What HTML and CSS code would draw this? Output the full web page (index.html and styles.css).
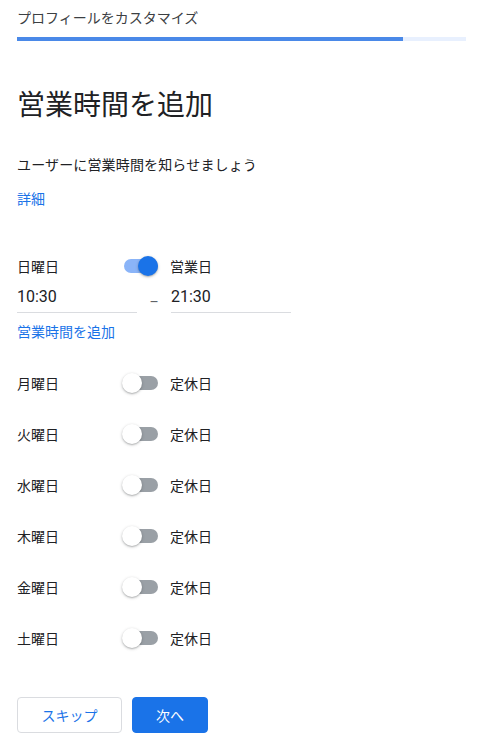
FILE: index.html
```html
<!DOCTYPE html>
<html lang="ja">
<head>
<meta charset="utf-8">
<title>営業時間を追加</title>
<link rel="stylesheet" href="styles.css">
</head>
<body>
<div class="page">
  <div class="header">プロフィールをカスタマイズ</div>
  <div class="progress"><div class="progress-fill"></div></div>

  <h1 class="title">営業時間を追加</h1>
  <p class="subtitle">ユーザーに営業時間を知らせましょう</p>
  <a class="link details">詳細</a>

  <div class="day-row first">
    <span class="day">日曜日</span>
    <span class="switch on"><span class="track"></span><span class="thumb"></span></span>
    <span class="status">営業日</span>
  </div>
  <div class="times">
    <div class="time-field">10:30</div>
    <div class="dash">–</div>
    <div class="time-field">21:30</div>
  </div>
  <a class="link add-hours">営業時間を追加</a>

  <div class="days">
    <div class="day-row">
      <span class="day">月曜日</span>
      <span class="switch"><span class="track"></span><span class="thumb"></span></span>
      <span class="status">定休日</span>
    </div>
    <div class="day-row">
      <span class="day">火曜日</span>
      <span class="switch"><span class="track"></span><span class="thumb"></span></span>
      <span class="status">定休日</span>
    </div>
    <div class="day-row">
      <span class="day">水曜日</span>
      <span class="switch"><span class="track"></span><span class="thumb"></span></span>
      <span class="status">定休日</span>
    </div>
    <div class="day-row">
      <span class="day">木曜日</span>
      <span class="switch"><span class="track"></span><span class="thumb"></span></span>
      <span class="status">定休日</span>
    </div>
    <div class="day-row">
      <span class="day">金曜日</span>
      <span class="switch"><span class="track"></span><span class="thumb"></span></span>
      <span class="status">定休日</span>
    </div>
    <div class="day-row">
      <span class="day">土曜日</span>
      <span class="switch"><span class="track"></span><span class="thumb"></span></span>
      <span class="status">定休日</span>
    </div>
  </div>

  <div class="actions">
    <button class="btn btn-outline">スキップ</button>
    <button class="btn btn-primary">次へ</button>
  </div>
</div>
</body>
</html>
```

FILE: styles.css
```css
* { box-sizing: border-box; }

html, body {
  margin: 0;
  padding: 0;
  background: #ffffff;
}

body {
  font-family: Roboto, "Noto Sans CJK JP", "Noto Sans", sans-serif;
  color: #202124;
}

.page {
  display: flex;
  flex-direction: column;
  align-items: flex-start;
  padding: 8px 20px 0 17px;
}

.header {
  font-size: 14px;
  line-height: 20px;
  color: #3c4043;
}

.progress {
  align-self: stretch;
  margin-top: 9px;
  height: 4px;
  background: #e8f0fe;
}

.progress-fill {
  width: 386px;
  height: 100%;
  background: #4a89e8;
}

.title {
  margin: 47px 0 0;
  font-size: 28px;
  line-height: 36px;
  font-weight: 400;
  color: #202124;
}

.subtitle {
  margin: 31px 0 0;
  font-size: 14px;
  line-height: 20px;
  letter-spacing: 0.15px;
  color: #202124;
}

.link {
  font-size: 14px;
  line-height: 20px;
  color: #1a73e8;
  text-decoration: none;
}

.details {
  margin-top: 14px;
}

.day-row {
  display: flex;
  align-items: center;
  height: 24px;
}

.day-row.first {
  margin-top: 45px;
}

.day {
  width: 105px;
  font-size: 14px;
  color: #202124;
}

.status {
  margin-left: 10px;
  font-size: 14px;
  color: #202124;
}

.switch {
  position: relative;
  width: 38px;
  height: 24px;
  flex: none;
}

.track {
  position: absolute;
  left: 2px;
  top: 5px;
  width: 34px;
  height: 14px;
  border-radius: 7px;
  background: #9aa0a6;
}

.thumb {
  position: absolute;
  left: 0;
  top: 2px;
  width: 20px;
  height: 20px;
  border-radius: 50%;
  background: #ffffff;
  box-shadow: 0 1px 3px rgba(60, 64, 67, 0.35), 0 1px 1px rgba(60, 64, 67, 0.15);
}

.switch.on .track {
  background: #8ab4f8;
}

.switch.on .thumb {
  left: 16px;
  background: #1a73e8;
}

.times {
  display: grid;
  grid-template-columns: 120px 34px 120px;
  margin-top: 9px;
}

.time-field {
  font-size: 16px;
  line-height: 20px;
  padding-bottom: 5px;
  border-bottom: 1px solid #dadce0;
  color: #202124;
}

.dash {
  text-align: center;
  font-size: 14px;
  line-height: 20px;
  padding-top: 5px;
  color: #5f6368;
}

.add-hours {
  margin-top: 9px;
}

.days {
  display: flex;
  flex-direction: column;
  gap: 27px;
  margin-top: 29px;
}

.actions {
  display: flex;
  gap: 10px;
  margin-top: 47px;
}

.btn {
  height: 36px;
  border-radius: 4px;
  font-family: Roboto, "Noto Sans CJK JP", sans-serif;
  font-size: 14px;
  font-weight: 400;
  cursor: pointer;
}

.btn-outline {
  width: 105px;
  background: #ffffff;
  border: 1px solid #dadce0;
  color: #1a73e8;
}

.btn-primary {
  width: 76px;
  background: #1a73e8;
  border: 1px solid #1a73e8;
  color: #ffffff;
}
```
